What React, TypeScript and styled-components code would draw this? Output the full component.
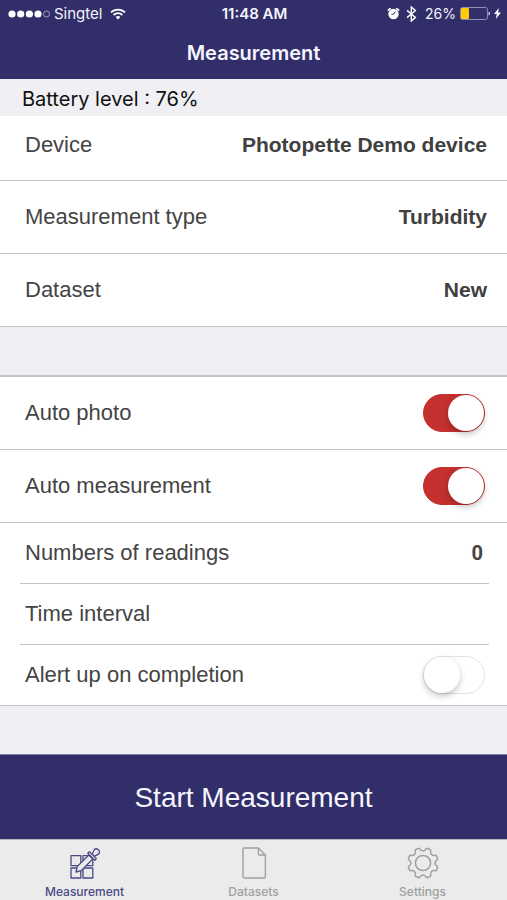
import React, { useState } from "react";
import styled, { createGlobalStyle } from "styled-components";

const navy = "#312e69";
const line = "#c4c4c7";
const system = `Inter, Roboto, "Liberation Sans", sans-serif`;
const helvetica = `"Liberation Sans", Arial, sans-serif`;

const GlobalStyle = createGlobalStyle`
  *, *::before, *::after { box-sizing: border-box; }
  body { margin: 0; background: #efeff4; }
  button, input { font: inherit; color: inherit; }
`;

const Screen = styled.div`
  display: flex;
  flex-direction: column;
  min-height: 100vh;
  font-family: ${helvetica};
  font-size: 22px;
  line-height: 26px;
  color: #444;
`;

const Header = styled.header`
  background: ${navy};
  color: #f4f4ff;
  font-family: ${system};
`;

const StatusBar = styled.div`
  display: grid;
  grid-template-columns: 1fr auto 1fr;
  align-items: center;
  height: 27px;
  padding: 0 6px 0 8px;
  font-size: 14px;
  line-height: 18px;
`;

const StatusGroup = styled.div<{ $end?: boolean }>`
  display: flex;
  align-items: center;
  justify-content: ${(p) => (p.$end ? "flex-end" : "flex-start")};
  gap: 4px;
`;

const RadioIcons = styled.span`
  display: flex;
  align-items: center;
  gap: 6px;
  margin-right: 4px;
`;

const Carrier = styled.span`
  margin-right: 4px;
  font-size: 15px;
`;

const Clock = styled.time`
  font-size: 15px;
  font-weight: 600;
`;

const Title = styled.h1`
  margin: 0;
  padding: 13px 0 13px;
  font-size: 20px;
  line-height: 26px;
  font-weight: 600;
  text-align: center;
`;

const BatteryLevel = styled.p`
  margin: 0;
  padding: 7px 22px 4px;
  font-family: ${system};
  font-size: 20px;
  line-height: 26px;
  color: #111;
`;

const Main = styled.main`
  flex: 1;
  display: flex;
  flex-direction: column;
  gap: 48px;
  padding-bottom: 48px;
`;

const Group = styled.section<{ $topLine?: boolean }>`
  background: #fff;
  border-top: ${(p) => (p.$topLine ? `2px solid ${line}` : "none")};
  border-bottom: 1px solid ${line};
`;

const PickerRow = styled.button<{ $first?: boolean }>`
  display: flex;
  align-items: center;
  justify-content: space-between;
  width: 100%;
  padding: ${(p) => (p.$first ? "16px 20px 22px 25px" : "23px 20px 23px 25px")};
  border: 0;
  border-top: ${(p) => (p.$first ? "0" : "1px")} solid ${line};
  background: none;
  text-align: left;
`;

const Value = styled.strong`
  font-size: 21px;
  color: #404040;
`;

const SwitchRow = styled.label<{ $compact?: boolean }>`
  display: flex;
  align-items: center;
  justify-content: space-between;
  padding: ${(p) => (p.$compact ? "11px 22px 11px 25px" : "17px 22px 17px 25px")};
  border-bottom: ${(p) => (p.$compact ? "0" : "1px")} solid ${line};
`;

const Inset = styled.div`
  margin: 0 18px 0 20px;
  border-bottom: 1px solid ${line};
`;

const FieldRow = styled.label`
  display: flex;
  align-items: center;
  gap: 16px;
  padding: 17px 6px 17px 5px;
`;

const Field = styled.input`
  flex: 1;
  min-width: 0;
  height: 26px;
  padding: 0;
  border: 0;
  outline: 0;
  background: none;
  font-family: Roboto, ${helvetica};
  font-size: 20px;
  font-weight: 700;
  text-align: right;
`;

const Switch = styled.input.attrs({ type: "checkbox", role: "switch" })`
  appearance: none;
  display: flex;
  flex: none;
  width: 62px;
  height: 38px;
  margin: 0;
  border: 1px solid #e2e2e2;
  border-radius: 19px;
  background: #fff;

  &::before {
    content: "";
    width: 36px;
    height: 36px;
    border-radius: 50%;
    background: #fff;
    box-shadow: 0 3px 6px rgba(0, 0, 0, 0.24);
  }

  &:checked {
    justify-content: flex-end;
    border-color: #c3302e;
    background: #c3302e;
  }
`;

const StartButton = styled.button`
  padding: 27px 16px 25px;
  border: 0;
  border-top: 1px solid #7f7da2;
  background: ${navy};
  color: #f6f6ff;
  font-size: 28px;
  line-height: 32px;
`;

const TabBar = styled.nav`
  display: grid;
  grid-template-columns: repeat(3, 1fr);
  background: #ebebeb;
  border-top: 1px solid #b5b5bf;
  font-family: ${system};
`;

const Tab = styled.a<{ $active?: boolean }>`
  display: flex;
  flex-direction: column;
  align-items: center;
  gap: 4px;
  padding: 6px 0 1px;
  color: ${(p) => (p.$active ? "#4c4a86" : "#a0a0a0")};
  font-size: 12px;
  line-height: 16px;
  font-weight: 500;
  text-decoration: none;
`;

const SignalIcon = () => (
  <svg width="42" height="10" viewBox="0 0 42 10" aria-hidden="true">
    {[4, 12.7, 21.4, 30].map((x) => (
      <circle key={x} cx={x} cy="5" r="3.6" fill="#fff" />
    ))}
    <circle cx="38.5" cy="5" r="3" fill="none" stroke="#a9a8c8" strokeWidth="0.9" />
  </svg>
);

const WifiIcon = () => (
  <svg width="16" height="12" viewBox="0 0 16 12" fill="none" stroke="#fff" strokeWidth="1.8" aria-hidden="true">
    <path d="M1 4.4a10 10 0 0 1 14 0" />
    <path d="M3.6 7a6.3 6.3 0 0 1 8.8 0" />
    <path d="M5.6 9.1a3.4 3.4 0 0 1 4.8 0L8 11.6z" fill="#fff" stroke="none" />
  </svg>
);

const AlarmIcon = () => (
  <svg width="13" height="13" viewBox="0 0 13 13" aria-hidden="true">
    <circle cx="6.5" cy="7" r="5.2" fill="#fff" />
    <path d="M1.4 3.2 3.2 1.6M11.6 3.2 9.8 1.6" stroke="#fff" strokeWidth="1.7" strokeLinecap="round" />
    <path d="M8.3 4.6 6.6 7.2H4.4" fill="none" stroke={navy} strokeWidth="1" />
  </svg>
);

const BluetoothIcon = () => (
  <svg width="11" height="16" viewBox="0 0 11 16" fill="none" stroke="#fff" strokeWidth="1.4" aria-hidden="true">
    <path d="M1 4.4 9.4 11.4 5.3 15V1l4.1 3.6L1 11.6" />
  </svg>
);

const BatteryIcon = () => (
  <svg width="30" height="13" viewBox="0 0 30 13" aria-hidden="true">
    <rect x="0.5" y="0.5" width="27" height="12" rx="2" fill="none" stroke="#8f8db4" />
    <rect x="1" y="1" width="8" height="11" rx="1" fill="#fdcb08" />
    <path d="M28.6 4.5v4a2.2 2.2 0 0 0 0-4z" fill="#fff" />
  </svg>
);

const BoltIcon = () => (
  <svg width="7" height="11" viewBox="0 0 7 11" aria-hidden="true">
    <path d="M4.8 0 0 6h2.8L1.8 11 7 4.6H4.2z" fill="#fff" />
  </svg>
);

const SampleIcon = () => (
  <svg width="32" height="34" viewBox="0 0 32 34" fill="none" stroke="currentColor" strokeWidth="1.3" strokeLinejoin="round" aria-hidden="true">
    <rect x="2" y="9.600" width="9.800" height="10" />
    <rect x="14" y="9.600" width="9.800" height="10" />
    <rect x="2" y="22" width="9.800" height="10" />
    <rect x="14" y="22" width="9.800" height="10" />
    <g fill="#ebebeb">
      <path d="M7 26 8.200 20.600 19.800 9 23.800 13 12.200 24.600z" />
      <path d="M23.200 8.200 25.400 3.400A3.200 3.200 0 0 1 30 7.600L25.400 10.400z" />
      <path d="M18.800 7.200 20.400 5.600 27.400 12.600 25.800 14.200z" />
    </g>
  </svg>
);

const FileIcon = () => (
  <svg width="32" height="34" viewBox="0 0 32 34" fill="none" stroke="currentColor" strokeWidth="1.4" strokeLinejoin="round" aria-hidden="true">
    <path d="M6.2 2H20.400L27.400 9V30.800A1.200 1.200 0 0 1 26.200 32H6.200A1.200 1.200 0 0 1 5 30.800V3.200A1.200 1.200 0 0 1 6.200 2z" />
    <path d="M20.400 2v5.800a1.200 1.200 0 0 0 1.200 1.200H27.400" />
  </svg>
);

const gearPath = (() => {
  const at = (deg: number, r: number) => {
    const a = (deg * Math.PI) / 180;
    return `${(16 + r * Math.sin(a)).toFixed(2)} ${(17 - r * Math.cos(a)).toFixed(2)}`;
  };
  let d = `M${at(12.5, 14.6)}`;
  for (let i = 0; i < 8; i++) {
    const c = 22.5 + i * 45;
    d += ` Q${at(c - 8, 15.4)} ${at(c - 5, 15.2)} L${at(c + 5, 15.2)} Q${at(c + 8, 15.4)} ${at(c + 10, 14.6)}`;
    d += ` C${at(c + 13, 11.4)} ${at(c + 32, 11.4)} ${at(c + 35, 14.6)}`;
  }
  return `${d}z`;
})();

const GearIcon = () => (
  <svg width="32" height="34" viewBox="0 0 32 34" fill="none" stroke="currentColor" strokeWidth="1.5" strokeLinejoin="round" aria-hidden="true">
    <path d={gearPath} />
    <circle cx="16" cy="17" r="7.6" />
  </svg>
);

export default function App() {
  const [autoPhoto, setAutoPhoto] = useState(true);
  const [autoMeasure, setAutoMeasure] = useState(true);
  const [alertDone, setAlertDone] = useState(false);
  const [readings, setReadings] = useState("0");
  const [timeInterval, setTimeInterval] = useState("");

  return (
    <Screen>
      <GlobalStyle />
      <Header>
        <StatusBar>
          <StatusGroup>
            <SignalIcon />
            <Carrier>Singtel</Carrier>
            <WifiIcon />
          </StatusGroup>
          <Clock>11:48 AM</Clock>
          <StatusGroup $end>
            <RadioIcons>
              <AlarmIcon />
              <BluetoothIcon />
            </RadioIcons>
            <span>26%</span>
            <BatteryIcon />
            <BoltIcon />
          </StatusGroup>
        </StatusBar>
        <Title>Measurement</Title>
      </Header>
      <BatteryLevel>Battery level : 76%</BatteryLevel>
      <Main>
        <Group>
          <PickerRow type="button" $first>
            <span>Device</span>
            <Value>Photopette Demo device</Value>
          </PickerRow>
          <PickerRow type="button">
            <span>Measurement type</span>
            <Value>Turbidity</Value>
          </PickerRow>
          <PickerRow type="button">
            <span>Dataset</span>
            <Value>New</Value>
          </PickerRow>
        </Group>
        <Group $topLine>
          <SwitchRow>
            <span>Auto photo</span>
            <Switch checked={autoPhoto} onChange={(e) => setAutoPhoto(e.target.checked)} />
          </SwitchRow>
          <SwitchRow>
            <span>Auto measurement</span>
            <Switch checked={autoMeasure} onChange={(e) => setAutoMeasure(e.target.checked)} />
          </SwitchRow>
          <Inset>
            <FieldRow>
              <span>Numbers of readings</span>
              <Field inputMode="numeric" value={readings} onChange={(e) => setReadings(e.target.value)} />
            </FieldRow>
          </Inset>
          <Inset>
            <FieldRow>
              <span>Time interval</span>
              <Field value={timeInterval} onChange={(e) => setTimeInterval(e.target.value)} />
            </FieldRow>
          </Inset>
          <SwitchRow $compact>
            <span>Alert up on completion</span>
            <Switch checked={alertDone} onChange={(e) => setAlertDone(e.target.checked)} />
          </SwitchRow>
        </Group>
      </Main>
      <StartButton type="button">Start Measurement</StartButton>
      <TabBar>
        <Tab href="#measurement" $active aria-current="page">
          <SampleIcon />
          Measurement
        </Tab>
        <Tab href="#datasets">
          <FileIcon />
          Datasets
        </Tab>
        <Tab href="#settings">
          <GearIcon />
          Settings
        </Tab>
      </TabBar>
    </Screen>
  );
}
